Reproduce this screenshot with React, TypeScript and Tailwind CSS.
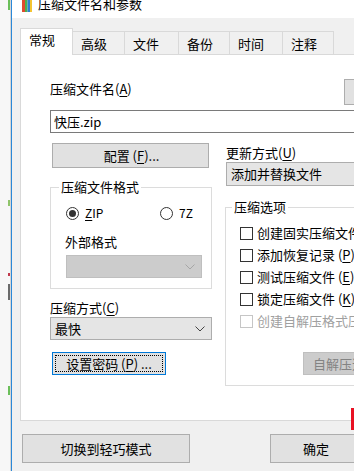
import type { ReactNode } from 'react'

const TABS = ['常规', '高级', '文件', '备份', '时间', '注释']

export default function App() {
  return (
    <div className="relative flex h-[471px] w-[354px] overflow-hidden bg-[#f0f0f0] font-['Noto_Sans_CJK_SC','Microsoft_YaHei',sans-serif] text-[13px] leading-[16px] text-black">
      <Desktop />
      <div className="w-px shrink-0 bg-[#2b88d8]" />
      <div className="flex w-[420px] shrink-0 flex-col">
        <TitleBar />
        <div className="flex items-end pl-[8px] pt-[10px]">
          {TABS.map((t, i) => (
            <Tab key={t} label={t} active={i === 0} width={[53, 52, 54, 51, 53, 51][i]} />
          ))}
        </div>
        <Panel />
        {/* footer buttons */}
        <div className="flex pl-[10px] pt-[13px]">
          <Btn className="h-[29px] w-[168px]">切换到轻巧模式</Btn>
          <Btn className="ml-[80px] h-[29px] w-[92px]">确定</Btn>
        </div>
      </div>
      {/* window behind, peeking out on the right */}
      <div className="absolute right-0 top-[408px] h-[22px] w-[3px] bg-[#e81123]" />
    </div>
  )
}

function Desktop() {
  return (
    <div className="relative w-[11px] shrink-0 border-r border-[#d6d6d6] bg-[#f7f7f7]">
      <div className="absolute left-[8px] top-[0px] h-[10px] w-[2px] bg-[#6bbf59]" />
      <div className="absolute left-[8px] top-[200px] h-[6px] w-[2px] bg-[#8fc46a]" />
      <div className="absolute left-[8px] top-[273px] h-[3px] w-[2px] bg-[#c0394b]" />
      <div className="absolute left-[8px] top-[284px] h-[16px] w-[2px] bg-[#6a6a6a]" />
      <div className="absolute left-[8px] top-[386px] h-[9px] w-[2px] bg-[#6bbf59]" />
    </div>
  )
}

function TitleBar() {
  return (
    <div className="flex h-[18px] items-start overflow-hidden bg-white pl-[10px]">
      <svg width="10" height="12" viewBox="0 0 10 12" className="shrink-0">
        <rect x="0" y="0" width="3" height="12" fill="#e04a2f" />
        <rect x="3" y="0" width="2.5" height="12" fill="#4caf50" />
        <rect x="5.5" y="0" width="2.5" height="12" fill="#2f7fd1" />
        <rect x="8" y="0" width="2" height="12" fill="#f4c431" />
      </svg>
      <span className="-mt-[4px] ml-[6px] whitespace-nowrap text-[13px] leading-[16px]">压缩文件名和参数</span>
    </div>
  )
}

function Tab({ label, active, width }: { label: string; active: boolean; width: number }) {
  if (active) {
    return (
      <div
        className="relative z-10 h-[27px] shrink-0 border border-b-0 border-[#d9d9d9] bg-white pl-[8px] pt-[3px]"
        style={{ width }}
      >
        {label}
      </div>
    )
  }
  return (
    <div className="-ml-px h-[24px] shrink-0 border border-[#d9d9d9] bg-[#f0f0f0] pl-[8px] pt-[4px]" style={{ width: width + 1 }}>
      {label}
    </div>
  )
}

function U({ children }: { children: ReactNode }) {
  return <span className="underline underline-offset-2">{children}</span>
}

function Btn({ children, className = '', disabled, focused }: { children: ReactNode; className?: string; disabled?: boolean; focused?: boolean }) {
  const tone = disabled
    ? 'border-[#bfbfbf] bg-[#cccccc] text-[#838383]'
    : focused
      ? 'border-[#0078d7] bg-[#e1e1e1]'
      : 'border-[#adadad] bg-[#e1e1e1]'
  return (
    <div className={`flex shrink-0 items-center justify-center border ${tone} ${className}`}>
      {focused ? (
        <div className="flex h-full w-full items-center justify-center border border-dotted border-black">{children}</div>
      ) : (
        children
      )}
    </div>
  )
}

function Chevron({ disabled }: { disabled?: boolean }) {
  return (
    <svg width="10" height="6" viewBox="0 0 10 6" fill="none" stroke={disabled ? '#a6a6a6' : '#444'} strokeWidth="1">
      <polyline points="0.5 0.5 5 5 9.5 0.5" />
    </svg>
  )
}

function Select({ value, className = '', disabled, chevron = true }: { value?: string; className?: string; disabled?: boolean; chevron?: boolean }) {
  return (
    <div
      className={`flex shrink-0 items-center justify-between border pl-[4px] pr-[6px] ${
        disabled ? 'border-[#bfbfbf] bg-[#cccccc]' : 'border-[#adadad] bg-[#e5e5e5]'
      } ${className}`}
    >
      <span className="whitespace-nowrap">{value}</span>
      {chevron && <Chevron disabled={disabled} />}
    </div>
  )
}

function Radio({ checked, children }: { checked?: boolean; children: ReactNode }) {
  return (
    <div className="flex items-center">
      <span className="flex h-[13px] w-[13px] items-center justify-center rounded-full border border-[#333] bg-white">
        {checked && <span className="h-[7px] w-[7px] rounded-full bg-[#333]" />}
      </span>
      <span className="ml-[6px] text-[12px]">{children}</span>
    </div>
  )
}

function Check({ children, disabled }: { children: ReactNode; disabled?: boolean }) {
  return (
    <div className={`flex h-[16px] items-center whitespace-nowrap ${disabled ? 'text-[#a0a0a0]' : ''}`}>
      <span className={`h-[13px] w-[13px] shrink-0 border bg-white ${disabled ? 'border-[#c6c6c6]' : 'border-[#333]'}`} />
      <span className="ml-[4px]">{children}</span>
    </div>
  )
}

function Panel() {
  return (
    <div className="relative -mt-px ml-[8px] h-[367px] w-[400px] border border-[#d9d9d9] bg-white pl-[29px]">
      <div className="mt-[24px] flex items-start">
        <div className="mt-[2px] w-[298px] whitespace-nowrap">
          压缩文件名(<U>A</U>)
        </div>
        <Btn className="h-[26px] w-[75px]">浏览</Btn>
      </div>
      <div className="mt-[5px] flex h-[23px] w-[370px] items-center border border-[#7a7a7a] pl-[3px]">快压.zip</div>

      <div className="flex items-start gap-[13px]">
        {/* left column */}
        <div className="flex w-[162px] shrink-0 flex-col">
          <Btn className="ml-[2px] mt-[10px] h-[25px] w-[157px]">
            <span className="pl-[2px]">
              配置 (<U>F</U>)...
            </span>
          </Btn>
          <fieldset className="mt-[11px] border border-[#dcdcdc] pb-[10px]">
            <legend className="ml-[8px] px-[2px] leading-[16px]">压缩文件格式</legend>
            <div className="mt-[10px] flex items-center pl-[15px]">
              <div className="w-[94px]">
                <Radio checked>
                  <U>Z</U>IP
                </Radio>
              </div>
              <Radio>7Z</Radio>
            </div>
            <div className="ml-[14px] mt-[13px]">外部格式</div>
            <Select disabled className="ml-[15px] mt-[5px] h-[23px] w-[136px]" />
          </fieldset>
          <div className="mt-[11px] whitespace-nowrap">
            压缩方式(<U>C</U>)
          </div>
          <Select value="最快" className="mt-[1px] h-[23px] w-[162px]" />
          <Btn focused className="ml-[2px] mt-[12px] h-[23px] w-[114px] p-[2px]">
            <span className="whitespace-nowrap">
              设置密码 (<U>P</U>) ...
            </span>
          </Btn>
        </div>

        {/* right column */}
        <div className="flex w-[190px] shrink-0 flex-col">
          <div className="ml-[1px] mt-[12px] whitespace-nowrap">
            更新方式(<U>U</U>)
          </div>
          <Select value="添加并替换文件" chevron={false} className="ml-[1px] mt-[1px] h-[24px] w-[189px]" />
          <fieldset className="mt-[13px] border border-[#dcdcdc] pb-[10px] pl-[14px]">
            <legend className="ml-[-8px] px-[2px] leading-[16px]">压缩选项</legend>
            <div className="mt-[10px] flex flex-col gap-[6px]">
              <Check>创建固实压缩文件</Check>
              <Check>
                添加恢复记录 (<U>P</U>)
              </Check>
              <Check>
                测试压缩文件 (<U>E</U>)
              </Check>
              <Check>
                锁定压缩文件 (<U>K</U>)
              </Check>
              <Check disabled>创建自解压格式压缩文件</Check>
            </div>
            <Btn disabled className="ml-[63px] mt-[23px] h-[23px] w-[90px] justify-start pl-[9px]">
              <span className="whitespace-nowrap">自解压选项</span>
            </Btn>
          </fieldset>
        </div>
      </div>
    </div>
  )
}
